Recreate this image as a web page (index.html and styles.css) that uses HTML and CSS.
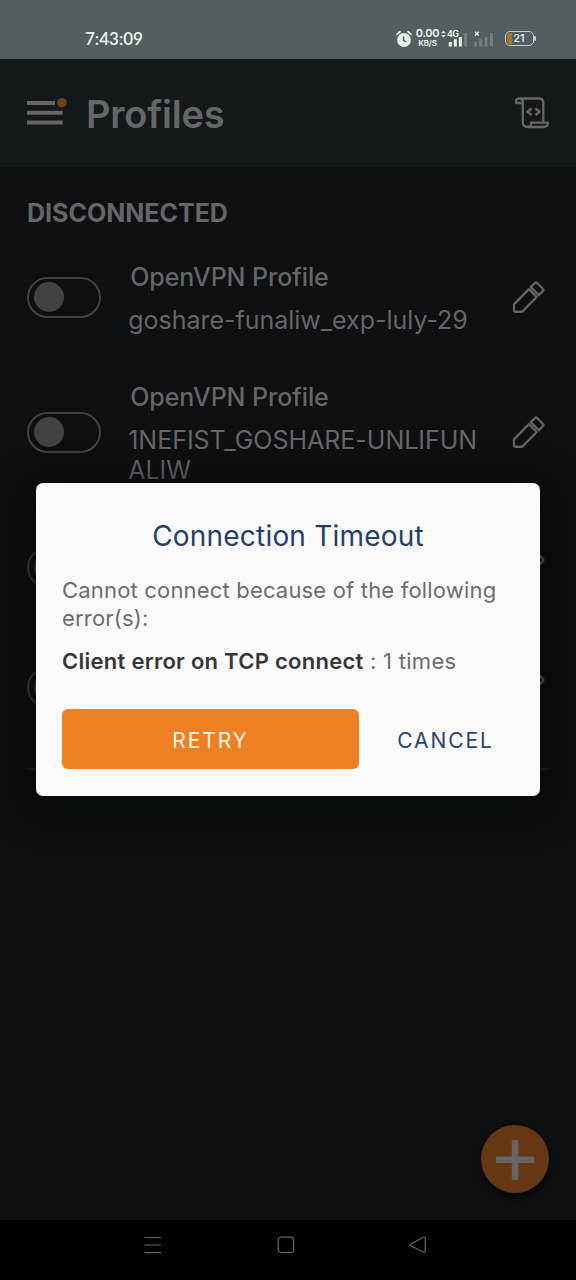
FILE: index.html
```html
<!DOCTYPE html>
<html lang="en">
<head>
<meta charset="utf-8">
<meta name="viewport" content="width=device-width, initial-scale=1">
<title>Profiles</title>
<link rel="stylesheet" href="styles.css">
</head>
<body>
<div class="screen">
  <div class="status">
    <span class="clock">7:43:09</span>
    <div class="status-icons">
      <svg class="alarm" width="16" height="18" viewBox="0 0 16 18"><circle cx="8" cy="10" r="6.9" fill="#e6eded"/><path d="M1 4.2L4 1.8M15 4.2L12 1.8" stroke="#e6eded" stroke-width="1.8" stroke-linecap="round"/><path d="M7.6 6.5V10.3L10 12" fill="none" stroke="#525f60" stroke-width="1.5"/></svg>
      <div class="speed"><span class="rate">0.00</span><span class="unit">KB/S</span></div>
      <div class="signal">
        <svg width="27" height="20" viewBox="0 0 27 20"><path d="M0 4.3L2.5 1.7L5 4.3ZM0 6L2.5 8.6L5 6Z" fill="#e6eded"/><path d="M9.3 13V17.6M14.3 10.3V17.6M19.4 8V17.6" stroke="#e6eded" stroke-width="3"/><path d="M24.6 4V17.6" stroke="#728081" stroke-width="3"/></svg>
        <span class="net">4G</span>
      </div>
      <svg class="nosim" width="20" height="20" viewBox="0 0 20 20"><path d="M1.5 13V17.6M6.7 10.3V17.6M12 8V17.6M17.4 4V17.6" stroke="#728081" stroke-width="2.8"/><path d="M1 2.7L4.7 6.4M4.7 2.7L1 6.4" stroke="#e6eded" stroke-width="1.4"/></svg>
      <div class="battery"><span>21</span></div>
    </div>
  </div>
  <header class="appbar">
    <svg class="menu" width="40" height="30" viewBox="0 0 40 30"><path d="M0 6H28M0 15.8H35.7M0 25.5H35.7" stroke="#646667" stroke-width="4"/><circle cx="35" cy="5.7" r="4.8" fill="#703f17"/></svg>
    <h1 class="title">Profiles</h1>
    <svg class="script" width="36" height="34" viewBox="0 0 36 34" fill="none" stroke="#646667" stroke-width="2.3" stroke-linejoin="round"><path d="M8.8 7H2V5Q2 2.5 5 2.5H25Q29.3 2.5 29.3 6.5V26.5M5.5 2.5Q8.8 2.5 8.8 6.5V26Q8.8 31 14 31H29Q34 31 34 26.7H17V28Q17 31 14 31"/><path d="M17.5 12.5L13.5 15.8L17.5 19.1M21.5 12.5L25.5 15.8L21.5 19.1" stroke-width="2.5"/></svg>
  </header>
  <main class="content">
    <h2 class="section">DISCONNECTED</h2>
    <div class="row"><div class="toggle"></div><div class="info"><div class="kind">OpenVPN Profile</div><div class="name">goshare-funaliw_exp-luly-29</div></div><svg class="pencil" viewBox="0 0 34 34"><path d="M2 23.3L16.9 8.2L24.7 16L10.3 30.7H3.2Q2 30.7 2 29.5Z"/><path d="M18.7 6.2L23 2Q24 1.2 25 2L31 8Q31.8 9 31 10L26.8 14.2Z"/></svg></div>
    <div class="row"><div class="toggle"></div><div class="info"><div class="kind">OpenVPN Profile</div><div class="name">1NEFIST_GOSHARE-UNLIFUN<br>ALIW</div></div><svg class="pencil" viewBox="0 0 34 34"><path d="M2 23.3L16.9 8.2L24.7 16L10.3 30.7H3.2Q2 30.7 2 29.5Z"/><path d="M18.7 6.2L23 2Q24 1.2 25 2L31 8Q31.8 9 31 10L26.8 14.2Z"/></svg></div>
    <div class="row"><div class="toggle"></div><div class="info"></div><svg class="pencil" viewBox="0 0 34 34"><path d="M2 23.3L16.9 8.2L24.7 16L10.3 30.7H3.2Q2 30.7 2 29.5Z"/><path d="M18.7 6.2L23 2Q24 1.2 25 2L31 8Q31.8 9 31 10L26.8 14.2Z"/></svg></div>
    <div class="row"><div class="toggle"></div><div class="info"></div><svg class="pencil" viewBox="0 0 34 34"><path d="M2 23.3L16.9 8.2L24.7 16L10.3 30.7H3.2Q2 30.7 2 29.5Z"/><path d="M18.7 6.2L23 2Q24 1.2 25 2L31 8Q31.8 9 31 10L26.8 14.2Z"/></svg></div>
    <div class="divider"></div>
    <div class="fab"><svg width="38" height="40" viewBox="0 0 38 40"><path d="M19 0V40M0 19.8H38" stroke="#656565" stroke-width="6.5"/></svg></div>
  </main>
  <nav class="navbar">
    <svg width="18" height="18" viewBox="0 0 18 18"><path d="M.5 1.5H17M.5 9H17M.5 16.6H17"/></svg>
    <svg width="18" height="18" viewBox="0 0 18 18"><rect x="1.2" y="1.2" width="15.4" height="15.4" rx="3.2"/></svg>
    <svg width="18" height="18" viewBox="0 0 18 18"><path d="M1.5 8L14.7 1.2Q16.2.7 16.2 2V15.5Q16.2 17 14.7 16.3L1.8 9.8Q.3 9 1.5 8Z"/></svg>
  </nav>
  <div class="dialog">
    <h2 class="dialog-title">Connection Timeout</h2>
    <p class="message">Cannot connect because of the following error(s):</p>
    <p class="detail"><b>Client error on TCP connect</b> : 1 times</p>
    <div class="actions"><button class="retry">RETRY</button><button class="cancel">CANCEL</button></div>
  </div>
</div>
</body>
</html>
```
FILE: styles.css
```css
* { box-sizing: border-box; margin: 0; padding: 0; }
body { background: #0d0f11; font-family: Inter, Roboto, sans-serif; color: #646667; }
svg { display: block; flex: none; }
.screen { position: relative; width: 576px; height: 1280px; display: flex; flex-direction: column; overflow: hidden; }
.status { height: 59px; flex: none; background: #525f60; color: #eef4f4; display: flex; justify-content: space-between; align-items: center; padding: 18px 42px 0 85px; }
.clock { font-family: Lato, sans-serif; font-size: 17px; font-weight: 600; letter-spacing: 0; }
.status-icons { display: flex; align-items: center; }
.speed { width: 25px; margin-left: 3px; display: flex; flex-direction: column; align-items: center; font-weight: 600; }
.rate { font-size: 11px; line-height: 11px; letter-spacing: -.3px; margin-top: -1px; }
.unit { font-size: 8px; line-height: 9px; letter-spacing: -.2px; }
.signal { position: relative; margin-left: 1px; }
.net { position: absolute; left: 6px; top: 0; font-size: 9px; line-height: 9px; font-weight: 600; letter-spacing: -.8px; }
.nosim { margin-left: 6px; }
.battery { position: relative; margin-left: 11px; width: 29px; height: 15px; border: 1.5px solid #c3cccc; border-radius: 5px; background: linear-gradient(90deg, #a17b27 6px, transparent 6px); background-clip: content-box; padding: 1px; font-size: 11px; line-height: 11px; text-align: center; font-weight: 500; }
.battery::after { content: ""; position: absolute; right: -3px; top: 4px; width: 2px; height: 5px; background: #c3cccc; border-radius: 1px; }
.battery span { display: block; margin-left: -1px; }
.appbar { height: 108px; flex: none; background: #131819; display: flex; align-items: center; padding: 0 26px 0 27px; }
.menu { margin-top: -3px; }
.title { flex: 1; margin: 2px 0 0 19px; font-size: 38px; line-height: 46px; font-weight: 600; letter-spacing: -.2px; }
.content { position: relative; flex: 1; padding: 30px 27px 0; }
.section { height: 40px; font-size: 25px; line-height: 32px; font-weight: 700; letter-spacing: 0; }
.row { height: 120px; display: flex; align-items: center; }
.row:nth-of-type(2) { height: 150px; }
.toggle { width: 74px; height: 41px; border: 2.5px solid #404243; border-radius: 21px; padding: 3px 4.5px; flex: none; }
.toggle::before { content: ""; display: block; width: 30px; height: 30px; border-radius: 50%; background: #404243; }
.info { flex: 1; padding: 2px 0 0 27.2px; white-space: nowrap; }
.kind { padding-left: 2px; font-size: 25px; line-height: 30px; font-weight: 500; margin-bottom: 13px; letter-spacing: -.07px; }
.name { font-size: 25px; line-height: 30px; letter-spacing: -.02px; }
.pencil { width: 34px; height: 34px; margin: 2px 3px 0 0; fill: none; stroke: #606263; stroke-width: 2.4; stroke-linejoin: round; }
.divider { height: 2px; margin-top: 21px; background: #202425; }
.fab { position: absolute; right: 27px; bottom: 27px; width: 68px; height: 68px; border-radius: 50%; background: #653712; display: flex; align-items: center; justify-content: center; padding-top: 2px; box-shadow: 0 3px 6px #050607; }
.navbar { height: 60px; flex: none; background: #000; display: flex; align-items: center; justify-content: space-between; padding: 0 149px 10px 144px; }
.navbar svg { fill: none; stroke: #666; stroke-width: 1.2; }
.dialog { position: absolute; left: 36px; top: 483px; width: 504px; height: 313px; border-radius: 7px; background: #fafafa; padding: 36px 26px 0; color: #6d6d6d; box-shadow: 0 8px 34px 8px rgba(1, 8, 8, .7); }
.dialog-title { text-align: center; font-size: 28px; line-height: 34px; font-weight: 400; color: #22406b; letter-spacing: .2px; }
.message { margin-top: 23px; font-size: 22px; line-height: 28px; letter-spacing: .18px; }
.detail { margin-top: 15px; font-size: 22px; line-height: 28px; letter-spacing: .27px; }
.detail b { font-weight: 600; color: #373737; }
.actions { margin-top: 34px; display: flex; }
button { border: 0; background: none; font: 400 21px/28px Inter, sans-serif; letter-spacing: 1.9px; }
.retry { width: 297px; height: 60px; border-radius: 6px; background: #ec8023; color: #fff3e4; padding-top: 4px; }
.cancel { flex: 1; color: #294370; padding: 4px 0 0 18px; }
```
